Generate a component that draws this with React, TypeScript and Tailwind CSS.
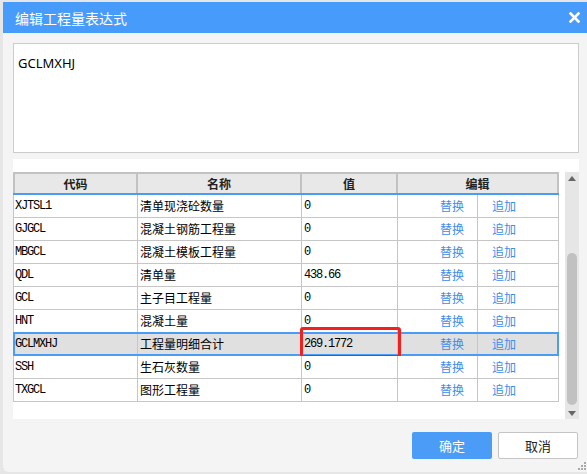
import React from "react";

const rows: [string, string, string][] = [
  ["XJTSL1", "清单现浇砼数量", "0"],
  ["GJGCL", "混凝土钢筋工程量", "0"],
  ["MBGCL", "混凝土模板工程量", "0"],
  ["QDL", "清单量", "438.66"],
  ["GCL", "主子目工程量", "0"],
  ["HNT", "混凝土量", "0"],
  ["GCLMXHJ", "工程量明细合计", "269.1772"],
  ["SSH", "生石灰数量", "0"],
  ["TXGCL", "图形工程量", "0"],
];

const cjk = "[font-family:'Microsoft_YaHei','Noto_Sans_CJK_SC',sans-serif]";
const mono = "[font-family:'Liberation_Mono',monospace] text-[12px] tracking-[-1.2px]";

export default function App() {
  return (
    <div className={`w-[587px] h-[474px] bg-[#e6e6e6] pt-[2px] pl-[3px] overflow-hidden ${cjk}`}>
      <div className="w-[584px] h-[470px] bg-[#f4f4f4] flex flex-col rounded-bl-[6px] relative">
        {/* title bar */}
        <div className="h-[31px] bg-[#469bfb] flex items-center justify-between pl-[12px] pr-[7px] shrink-0">
          <span className="text-white text-[14px] leading-none">编辑工程量表达式</span>
          <svg width="11" height="11" viewBox="0 0 11 11">
            <path d="M1.5 1.5 L9.5 9.5 M9.5 1.5 L1.5 9.5" stroke="white" strokeWidth="2.6" strokeLinecap="square" />
          </svg>
        </div>
        <div className="pl-[10px] pr-[8px] pt-[10px] flex flex-col">
          {/* expression box */}
          <div className="w-[566px] h-[110px] bg-white border border-[#cccccc] px-[4px] pt-[5px]">
            <span className="text-[13px] text-black [font-family:'Segoe_UI','Noto_Sans',sans-serif]">GCLMXHJ</span>
          </div>
          {/* table panel */}
          <div className="w-[566px] h-[260px] bg-white mt-[6px] pt-[13px] flex">
            <div className="w-[546px] flex flex-col">
              {/* header */}
              <div className="grid grid-cols-[125px_164px_96px_161px] h-[23px] bg-[#e8e8e8] border-t-2 border-[#c2c2c2] border-b-2 border-b-[#4a9cf5] text-[12px] font-bold text-[#222]">
                <div className="border-l-2 border-r-2 border-[#c2c2c2] flex items-center justify-center">代码</div>
                <div className="border-r-2 border-[#c2c2c2] flex items-center justify-center">名称</div>
                <div className="border-r-2 border-[#c2c2c2] flex items-center justify-center">值</div>
                <div className="border-r-2 border-[#c2c2c2] flex items-center justify-center">编辑</div>
              </div>
              {rows.map(([code, name, val]) => {
                const sel = code === "GCLMXHJ";
                return (
                  <div
                    key={code}
                    className={`relative grid grid-cols-[125px_164px_96px_80px_81px] h-[23px] text-[12px] ${sel ? "bg-[#e0e0e0]" : "bg-white"}`}
                  >
                    <div className={`border-l border-r border-b border-[#c6c6c6] flex items-center pl-[1px] text-black ${mono}`}>{code}</div>
                    <div className="border-r border-b border-[#c6c6c6] flex items-center pl-[2px] text-black">{name}</div>
                    <div className={`border-r border-b border-[#c6c6c6] flex items-center pl-[2px] text-black ${mono}`}>{val}</div>
                    <div className="border-r border-b border-[#c6c6c6] flex items-center pl-[42px] text-[#3d8ee9]">替换</div>
                    <div className="border-r border-b border-[#c6c6c6] flex items-center pl-[14px] text-[#3d8ee9]">追加</div>
                    {sel && (
                      <>
                        <div className="absolute left-0 right-0 top-[-1px] bottom-0 border-2 border-[#4a9cf5] pointer-events-none" />
                        <div className="absolute left-[287px] top-[-6px] w-[101px] h-[31px] border-[3px] border-[#f42020] rounded-[3px] pointer-events-none" />
                      </>
                    )}
                  </div>
                );
              })}
            </div>
            <div className="w-[6px]" />
            {/* scrollbar */}
            <div className="w-[14px] h-[247px] bg-[#e6e6e6] relative">
              <svg className="absolute left-[3px] top-[4px]" width="8" height="5" viewBox="0 0 8 5">
                <path d="M0 5 L4 0 L8 5 Z" fill="#666" />
              </svg>
              <div className="absolute left-[2px] top-[81px] w-[10px] h-[152px] bg-[#c1c1c1] rounded-[5px]" />
              <svg className="absolute left-[3px] top-[239px]" width="8" height="5" viewBox="0 0 8 5">
                <path d="M0 0 L8 0 L4 5 Z" fill="#666" />
              </svg>
            </div>
          </div>
          {/* buttons */}
          <div className="flex justify-end gap-[6px] mt-[13px] pr-[1px]">
            <button className="w-[80px] h-[27px] bg-[#4a9cf7] rounded-[2px] text-white text-[13px]">确定</button>
            <button className="w-[80px] h-[27px] bg-white border border-[#c4c4c4] rounded-[2px] text-[#222] text-[13px]">取消</button>
          </div>
        </div>
        {/* resize grip */}
        <svg className="absolute right-[1px] bottom-[2px]" width="8" height="8" viewBox="0 0 8 8">
          <rect x="6" y="0" width="2" height="2" fill="#aaa" />
          <rect x="3" y="3" width="2" height="2" fill="#aaa" />
          <rect x="6" y="3" width="2" height="2" fill="#aaa" />
          <rect x="0" y="6" width="2" height="2" fill="#aaa" />
          <rect x="3" y="6" width="2" height="2" fill="#aaa" />
          <rect x="6" y="6" width="2" height="2" fill="#aaa" />
        </svg>
      </div>
    </div>
  );
}
